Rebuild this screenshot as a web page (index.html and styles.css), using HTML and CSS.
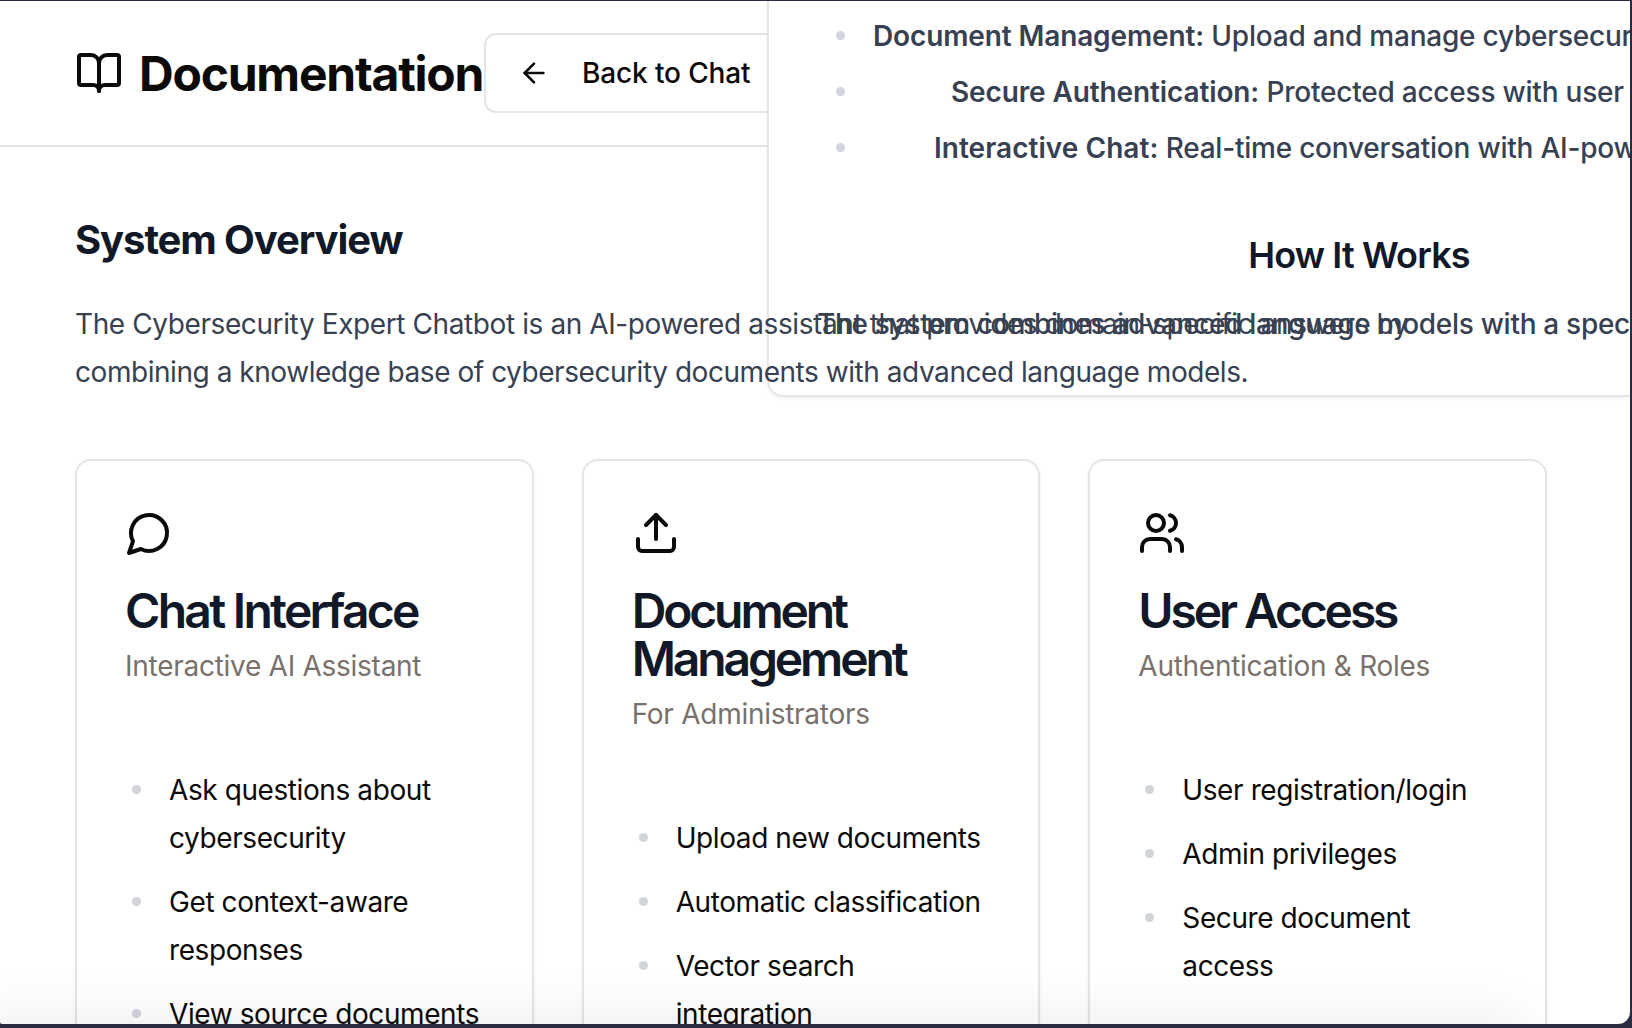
FILE: index.html
```html
<!DOCTYPE html>
<html lang="en">
<head>
<meta charset="utf-8">
<title>Documentation</title>
<link rel="stylesheet" href="styles.css">
</head>
<body>
<div class="window">
  <header class="topbar">
    <svg class="icon" width="48" height="48" viewBox="0 0 24 24"><path d="M12 7v14"/><path d="M3 18a1 1 0 0 1-1-1V4a1 1 0 0 1 1-1h5a4 4 0 0 1 4 4 4 4 0 0 1 4-4h5a1 1 0 0 1 1 1v13a1 1 0 0 1-1 1h-6a3 3 0 0 0-3 3 3 3 0 0 0-3-3z"/></svg>
    <h1 class="title">Documentation</h1>
    <a class="back">
      <svg class="icon" width="32" height="32" viewBox="0 0 24 24"><path d="m12 19-7-7 7-7"/><path d="M19 12H5"/></svg>
      <span>Back to Chat</span>
    </a>
  </header>

  <main class="content">
    <h2 class="heading">System Overview</h2>
    <p class="intro"><span class="lead">The Cybersecurity Expert Chatbot is an AI-powered assistant that provides domain-specific answers by</span><br>combining a knowledge base of cybersecurity documents with advanced language models.</p>

    <div class="cards">
      <section class="card">
        <svg class="icon" width="48" height="48" viewBox="0 0 24 24"><path d="M7.9 20A9 9 0 1 0 4 16.1L2 22Z"/></svg>
        <h3 class="card-title chat-title">Chat Interface</h3>
        <p class="card-sub">Interactive AI Assistant</p>
        <ul class="list">
          <li>Ask questions about<br>cybersecurity</li>
          <li>Get context-aware<br>responses</li>
          <li>View source documents</li>
        </ul>
      </section>
      <section class="card">
        <svg class="icon" width="48" height="48" viewBox="0 0 24 24"><path d="M21 15v4a2 2 0 0 1-2 2H5a2 2 0 0 1-2-2v-4"/><path d="m17 8-5-5-5 5"/><path d="M12 3v12"/></svg>
        <h3 class="card-title">Document<br>Management</h3>
        <p class="card-sub">For Administrators</p>
        <ul class="list">
          <li>Upload new documents</li>
          <li>Automatic classification</li>
          <li>Vector search<br>integration</li>
        </ul>
      </section>
      <section class="card">
        <svg class="icon" width="48" height="48" viewBox="0 0 24 24"><path d="M16 21v-2a4 4 0 0 0-4-4H6a4 4 0 0 0-4 4v2"/><circle cx="9" cy="7" r="4"/><path d="M22 21v-2a4 4 0 0 0-3-3.87"/><path d="M16 3.13a4 4 0 0 1 0 7.75"/></svg>
        <h3 class="card-title">User Access</h3>
        <p class="card-sub">Authentication &amp; Roles</p>
        <ul class="list">
          <li>User registration/login</li>
          <li>Admin privileges</li>
          <li>Secure document<br>access</li>
        </ul>
      </section>
    </div>
  </main>

  <aside class="popover">
    <ul class="features">
      <li><b>Document Management:</b> Upload and manage cybersecurity</li>
      <li class="shift-lg"><b>Secure Authentication:</b> Protected access with user roles</li>
      <li class="shift-md"><b class="chat">Interactive Chat:</b> Real-time conversation with AI-powered</li>
    </ul>
    <h2 class="how">How It Works</h2>
    <p class="how-text">The system combines advanced language models with a specialized</p>
  </aside>
  <div class="bottom-shade"></div>
</div>
</body>
</html>
```
FILE: styles.css
```css
* { box-sizing: border-box; margin: 0; padding: 0; }
html { background: #2a2d42; }
body {
  height: 1028px;
  padding: 1px 2px 4px 0;
  overflow: hidden;
  font-family: Inter, "Liberation Sans", sans-serif;
  font-size: 28px;
  color: #0c0a09;
}
.window {
  position: relative;
  height: 1023px;
  overflow: hidden;
  background: #fff;
  border-radius: 0 0 12px 2px;
}
.icon {
  display: block;
  flex: none;
  fill: none;
  stroke: currentColor;
  stroke-width: 2;
  stroke-linecap: round;
  stroke-linejoin: round;
}

.topbar {
  display: flex;
  align-items: center;
  height: 146px;
  padding-left: 75px;
  border-bottom: 2px solid #e5e5e5;
}
.title {
  width: 345px;
  margin-left: 16px;
  padding-top: 2px;
  font-size: 48px;
  line-height: 48px;
  font-weight: 700;
  letter-spacing: -1.22px;
  white-space: nowrap;
}
.back {
  display: flex;
  align-items: center;
  gap: 32px;
  height: 80px;
  padding: 0 32px;
  border: 2px solid #e5e5e5;
  border-radius: 12px;
  font-weight: 500;
  letter-spacing: -0.13px;
  line-height: 40px;
  white-space: nowrap;
}

.content { padding: 69px 83px 0 75px; }
.heading {
  font-size: 40px;
  line-height: 48px;
  font-weight: 700;
  letter-spacing: -1.09px;
  color: #111827;
}
.intro {
  position: relative;
  z-index: 2;
  margin-top: 36px;
  line-height: 48px;
  letter-spacing: -0.45px;
  color: #374151;
  white-space: nowrap;
}
.lead { letter-spacing: -0.4px; }
.cards {
  display: grid;
  grid-template-columns: repeat(3, 1fr);
  gap: 48px;
  margin-top: 63px;
}
.card {
  height: 640px;
  padding: 48px;
  border: 2px solid #e5e5e5;
  border-radius: 16px;
  box-shadow: 0 2px 4px rgba(0, 0, 0, .05);
  white-space: nowrap;
}
.card-title {
  margin-top: 30px;
  font-size: 48px;
  line-height: 48px;
  font-weight: 600;
  letter-spacing: -3.13px;
  color: #111827;
}
.chat-title { letter-spacing: -2.7px; }
.card-sub {
  margin-top: 11px;
  line-height: 40px;
  letter-spacing: -0.27px;
  color: #78716c;
}
.list {
  display: grid;
  gap: 16px;
  margin-top: 80px;
  padding-left: 44px;
  list-style: none;
  line-height: 48px;
  letter-spacing: -0.41px;
}
.list li, .features li { position: relative; }
.list li::before, .features li::before {
  content: "";
  position: absolute;
  left: -37px;
  top: 19px;
  width: 9px;
  height: 9px;
  border-radius: 50%;
  background: #d1d5db;
}

.popover {
  position: absolute;
  z-index: 1;
  left: 767px;
  top: -20px;
  width: 1184px;
  height: 416px;
  padding: 33px 48px 0;
  background: #fff;
  border: 2px solid #e5e5e5;
  border-radius: 16px;
  box-shadow: 0 2px 4px rgba(0, 0, 0, .05);
  font-weight: 500;
  line-height: 40px;
  letter-spacing: -0.22px;
  color: #374151;
  white-space: nowrap;
}
.features {
  display: grid;
  gap: 16px;
  padding-left: 56px;
  list-style: none;
}
.features li::before { left: -37px; top: 15px; }
.features b { font-weight: 600; letter-spacing: -0.12px; }
.features .chat { letter-spacing: 0.04px; }
.features .shift-lg { text-indent: 78px; }
.features .shift-md { text-indent: 61px; }
.how {
  margin-top: 63px;
  text-align: center;
  font-size: 36px;
  line-height: 48px;
  font-weight: 600;
  letter-spacing: -0.85px;
  color: #111827;
}
.how-text { margin-top: 25px; letter-spacing: -0.3px; }

.bottom-shade {
  position: absolute;
  z-index: 3;
  left: -20px;
  right: 110px;
  bottom: -40px;
  height: 40px;
  box-shadow: 0 0 60px rgba(0, 0, 0, .1);
}
```
